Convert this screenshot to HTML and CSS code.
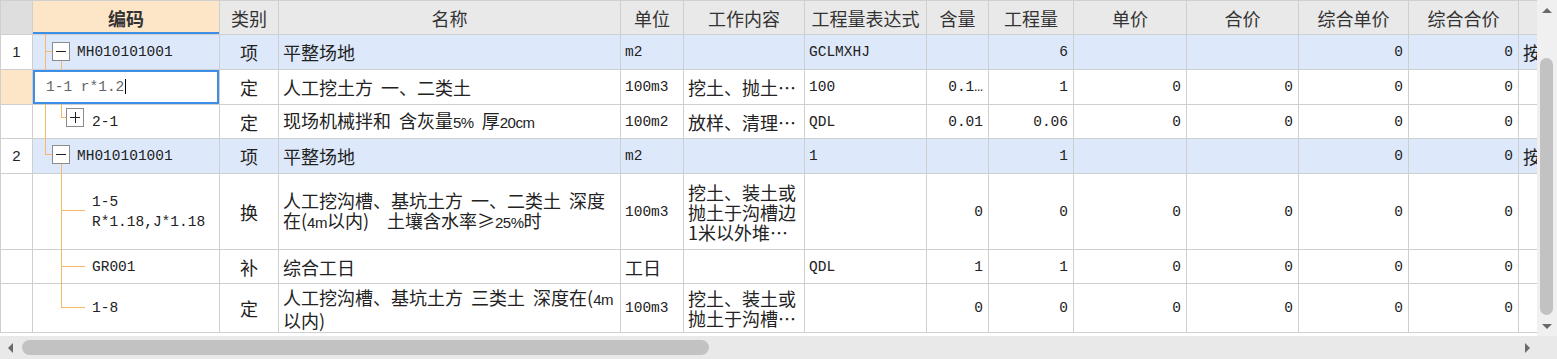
FILE: index.html
```html
<!DOCTYPE html>
<html lang="zh-CN">
<head>
    <meta charset="UTF-8">
    <title>分部分项</title>
    <link rel="stylesheet" href="styles.css">
</head>
<body>
    <div id="frame">
        <div id="view">
            <table class="sheet">
                <colgroup>
                    <col class="w-no">
                    <col class="w-code">
                    <col class="w-type">
                    <col class="w-name">
                    <col class="w-unit">
                    <col class="w-work">
                    <col class="w-expr">
                    <col class="w-qty">
                    <col class="w-amount">
                    <col class="w-price">
                    <col class="w-sum">
                    <col class="w-cprice">
                    <col class="w-csum">
                    <col class="w-more">
                </colgroup>
                <tr class="h-head">
                    <th class="top-left"></th>
                    <th class="key">编码</th>
                    <th>类别</th>
                    <th>名称</th>
                    <th>单位</th>
                    <th>工作内容</th>
                    <th>工程量表达式</th>
                    <th>含量</th>
                    <th>工程量</th>
                    <th>单价</th>
                    <th>合价</th>
                    <th>综合单价</th>
                    <th>综合合价</th>
                    <th></th>
                </tr>
                <tr class="qd h35">
                    <td class="no">1</td>
                    <td class="mono lv1">MH010101001</td>
                    <td class="center">项</td>
                    <td>平整场地</td>
                    <td class="mono">m2</td>
                    <td></td>
                    <td class="mono">GCLMXHJ</td>
                    <td></td>
                    <td class="num">6</td>
                    <td></td>
                    <td></td>
                    <td class="num">0</td>
                    <td class="num">0</td>
                    <td class="more">按</td>
                </tr>
                <tr class="current h35">
                    <td class="no"></td>
                    <td class="mono editing">1-1 r*1.2<span class="caret"></span></td>
                    <td class="center">定</td>
                    <td>人工挖土方 一、二类土</td>
                    <td class="mono">100m3</td>
                    <td>挖土、抛土…</td>
                    <td class="mono">100</td>
                    <td class="num">0.1…</td>
                    <td class="num">1</td>
                    <td class="num">0</td>
                    <td class="num">0</td>
                    <td class="num">0</td>
                    <td class="num">0</td>
                    <td></td>
                </tr>
                <tr class="h34">
                    <td class="no"></td>
                    <td class="mono lv2">2-1</td>
                    <td class="center">定</td>
                    <td>现场机械拌和 含灰量<span class="lat">5%</span> 厚<span class="lat">20cm</span></td>
                    <td class="mono">100m2</td>
                    <td>放样、清理…</td>
                    <td class="mono">QDL</td>
                    <td class="num">0.01</td>
                    <td class="num">0.06</td>
                    <td class="num">0</td>
                    <td class="num">0</td>
                    <td class="num">0</td>
                    <td class="num">0</td>
                    <td></td>
                </tr>
                <tr class="qd h35">
                    <td class="no">2</td>
                    <td class="mono lv1">MH010101001</td>
                    <td class="center">项</td>
                    <td>平整场地</td>
                    <td class="mono">m2</td>
                    <td></td>
                    <td class="mono">1</td>
                    <td></td>
                    <td class="num">1</td>
                    <td></td>
                    <td></td>
                    <td class="num">0</td>
                    <td class="num">0</td>
                    <td class="more">按</td>
                </tr>
                <tr class="h76 loose">
                    <td class="no"></td>
                    <td class="mono lv2">1-5<br>R*1.18,J*1.18</td>
                    <td class="center">换</td>
                    <td>人工挖沟槽、基坑土方 一、二类土 深度<br>在(<span class="lat">4m</span>以内)　土壤含水率≥<span class="lat">25%</span>时</td>
                    <td class="mono">100m3</td>
                    <td>挖土、装土或<br>抛土于沟槽边<br>1米以外堆…</td>
                    <td></td>
                    <td class="num">0</td>
                    <td class="num">0</td>
                    <td class="num">0</td>
                    <td class="num">0</td>
                    <td class="num">0</td>
                    <td class="num">0</td>
                    <td></td>
                </tr>
                <tr class="h34">
                    <td class="no"></td>
                    <td class="mono lv2">GR001</td>
                    <td class="center">补</td>
                    <td>综合工日</td>
                    <td>工日</td>
                    <td></td>
                    <td class="mono">QDL</td>
                    <td class="num">1</td>
                    <td class="num">1</td>
                    <td class="num">0</td>
                    <td class="num">0</td>
                    <td class="num">0</td>
                    <td class="num">0</td>
                    <td></td>
                </tr>
                <tr class="h49 loose">
                    <td class="no"></td>
                    <td class="mono lv2">1-8</td>
                    <td class="center">定</td>
                    <td>人工挖沟槽、基坑土方 三类土 深度在(<span class="lat">4m</span><br>以内)</td>
                    <td class="mono">100m3</td>
                    <td>挖土、装土或<br>抛土于沟槽…</td>
                    <td></td>
                    <td class="num">0</td>
                    <td class="num">0</td>
                    <td class="num">0</td>
                    <td class="num">0</td>
                    <td class="num">0</td>
                    <td class="num">0</td>
                    <td></td>
                </tr>
            </table>
            <!-- tree lines of the code column -->
            <svg class="tree" width="219" height="332" viewBox="0 0 219 332">
                <g class="branch">
                    <rect x="45" y="34" width="1" height="35"/>
                    <rect x="45" y="104" width="1" height="51"/>
                    <rect x="45" y="51" width="8" height="1"/>
                    <rect x="45" y="154" width="8" height="1"/>
                    <rect x="61" y="61" width="1" height="8"/>
                    <rect x="61" y="104" width="1" height="14"/>
                    <rect x="61" y="117" width="6" height="1"/>
                    <rect x="61" y="164" width="1" height="144"/>
                    <rect x="61" y="210" width="24" height="1"/>
                    <rect x="61" y="266" width="24" height="1"/>
                    <rect x="61" y="307" width="24" height="1"/>
                </g>
                <rect class="node" x="52.5" y="42.5" width="17" height="18"/>
                <rect class="sign" x="56" y="51" width="10" height="1"/>
                <rect class="node" x="52.5" y="145.5" width="17" height="18"/>
                <rect class="sign" x="56" y="154" width="10" height="1"/>
                <rect class="node" x="66.5" y="108.5" width="17" height="18"/>
                <rect class="sign" x="70" y="117" width="10" height="1"/>
                <rect class="sign" x="75" y="112" width="1" height="11"/>
            </svg>
        </div>
        <div id="vbar">
            <div class="arrow-box"><span class="tri up"></span></div>
            <div class="vtrack"><div class="vthumb"></div></div>
            <div class="arrow-box"><span class="tri down"></span></div>
        </div>
        <div id="hbar">
            <div class="arrow-side"><span class="tri left"></span></div>
            <div class="htrack"><div class="hthumb"></div></div>
            <div class="arrow-side"><span class="tri right"></span></div>
        </div>
        <div id="corner"></div>
    </div>
</body>
</html>
```

FILE: styles.css
```css
body{
    margin: 0;
    font-family: "Noto Sans CJK SC", sans-serif;
    font-size: 18px;
    color: #222;
    background: #fff;
}
#frame{
    width: 1557px;
    height: 359px;
    display: grid;
    grid-template-columns: 1537px 20px;
    grid-template-rows: 336px 23px;
}
#view{
    position: relative;
    overflow: hidden;
    background: #fff;
}
.sheet{
    border-collapse: collapse;
    table-layout: fixed;
    width: 1598px;
}
.sheet th,
.sheet td{
    border: 1px solid #cfcfcf;
    padding: 0 4px;
    line-height: 18px;
    word-spacing: 4px;
    white-space: nowrap;
    overflow: hidden;
    vertical-align: middle;
    text-align: left;
}
.sheet th{
    background: #e9e9e9;
    font-weight: normal;
    text-align: center;
    color: #333;
}
.sheet th.top-left{
    background: #dedede;
}
.sheet th.key{
    background: #fde5c8;
    font-weight: bold;
    box-shadow: inset 0 -2px 0 #3d8ee6;
}
.w-no{ width: 32px; }
.w-code{ width: 187px; }
.w-type{ width: 59px; }
.w-name{ width: 342px; }
.w-unit{ width: 63px; }
.w-work{ width: 121px; }
.w-expr{ width: 122px; }
.w-qty{ width: 62px; }
.w-amount{ width: 85px; }
.w-price{ width: 113px; }
.w-sum{ width: 112px; }
.w-cprice{ width: 110px; }
.w-csum{ width: 110px; }
.w-more{ width: 80px; }

.h-head{ height: 34px; }
.h34{ height: 34px; }
.h35{ height: 35px; }
.h49{ height: 49px; }
.h76{ height: 76px; }

.loose td{
    line-height: 20px;
}
.mono,
.num{
    font-family: "Liberation Mono", "Noto Sans CJK SC", monospace;
    font-size: 14.5px;
    word-spacing: 0;
}
.lat{
    font-family: "Liberation Sans Narrow", "Liberation Sans", sans-serif;
    font-size: 15px;
    letter-spacing: -0.5px;
}
.sheet td.no{
    font-family: "Liberation Sans", sans-serif;
    font-size: 15px;
}
.sheet td.center,
.sheet td.no{
    text-align: center;
}
.sheet td.num{
    text-align: right;
    padding-right: 5px;
}
.sheet td.lv1{
    padding-left: 44px;
}
.sheet td.lv2{
    padding-left: 59px;
    line-height: 20px;
}
.qd td{
    background: #dde9fb;
}
.qd td.no{
    background: #fff;
}
.current td.no{
    background: #fde5c8;
}
.sheet td.editing{
    padding-left: 13px;
    color: #666;
    background: #fff;
    word-spacing: 0;
    box-shadow: inset 0 0 0 2px #3d8ee6;
}
.caret{
    display: inline-block;
    width: 1px;
    height: 15px;
    margin-left: 1px;
    background: #000;
    vertical-align: -3px;
}
.more{
    padding-left: 3px;
}
.tree{
    position: absolute;
    left: 0;
    top: 0;
    pointer-events: none;
    shape-rendering: crispEdges;
}
.branch rect{
    fill: #f9b867;
}
.node{
    fill: #fff;
    stroke: #8c8c8c;
    stroke-width: 1;
}
.sign{
    fill: #222;
}

#vbar{
    background: #f0f0f0;
    display: flex;
    flex-direction: column;
}
.arrow-box{
    height: 20px;
    display: flex;
    align-items: center;
    justify-content: center;
}
.vtrack{
    flex: 1;
    padding: 38px 0 1px 3px;
}
.vthumb{
    width: 13px;
    height: 257px;
    border-radius: 7px;
    background: #c2c2c2;
}
#hbar{
    background: #e9e9e9;
    display: flex;
    align-items: center;
}
.arrow-side{
    width: 20px;
    height: 100%;
    display: flex;
    align-items: center;
    justify-content: center;
}
.htrack{
    flex: 1;
    padding-left: 2px;
}
.hthumb{
    width: 687px;
    height: 15px;
    border-radius: 8px;
    background: #c2c2c2;
}
#corner{
    background: #e9e9e9;
}
.tri{
    width: 0;
    height: 0;
    border: 5px solid transparent;
}
.tri.up{
    border-top-width: 0;
    border-bottom: 5px solid #6a6a6a;
}
.tri.down{
    border-bottom-width: 0;
    border-top: 5px solid #6a6a6a;
}
.tri.left{
    border-left-width: 0;
    border-right: 5px solid #6a6a6a;
}
.tri.right{
    border-right-width: 0;
    border-left: 5px solid #6a6a6a;
}
```
